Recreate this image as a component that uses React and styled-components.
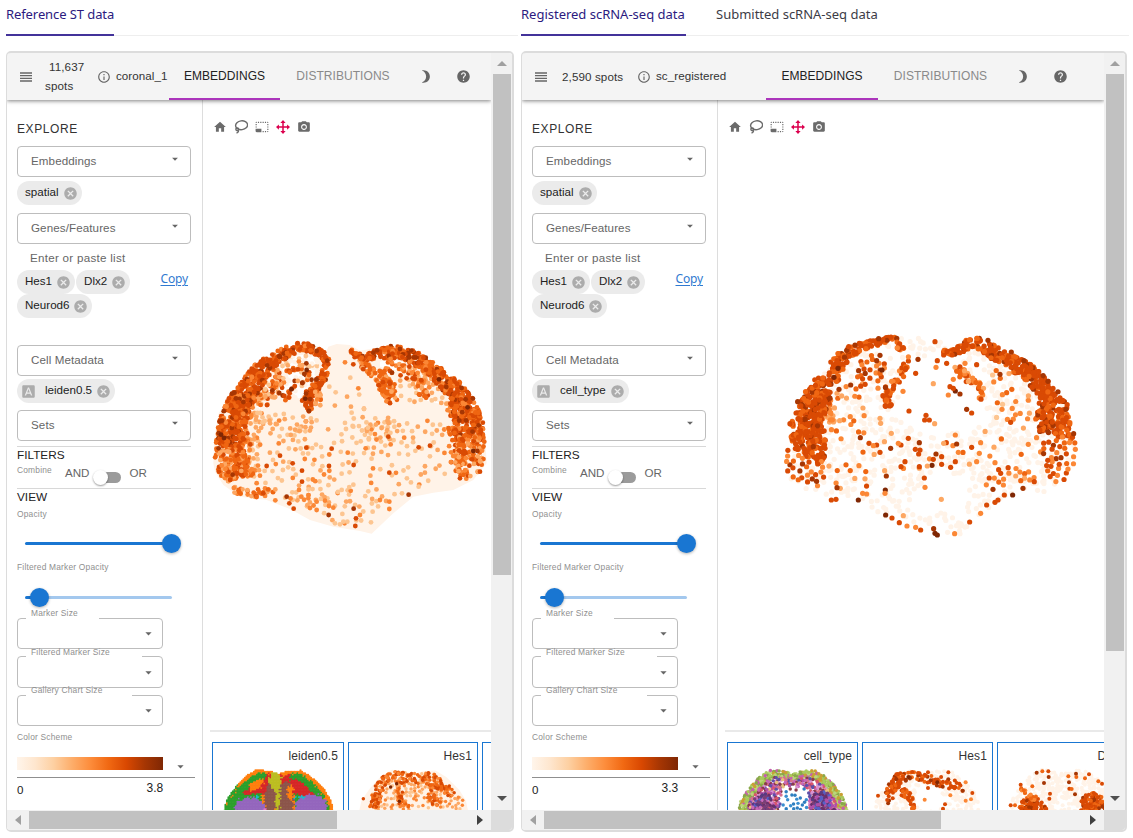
import React from 'react';
import styled, { createGlobalStyle } from 'styled-components';
import {
  MdReorder, MdInfoOutline, MdBrightness3, MdHelp, MdHome,
  MdPhotoSizeSelectSmall, MdPhotoCamera, MdCancel, MdFontDownload, MdArrowDropDown,
} from 'react-icons/md';

const Global = createGlobalStyle`
  * { box-sizing: border-box; }
  html, body { margin: 0; background: #fff; overflow: hidden; }
  body { font-family: "Liberation Sans", Arial, sans-serif; font-size: 11.6px; letter-spacing: 0.06px; color: #222; }
`;

/* ---------- point clouds ---------- */

const O = ['#fff3e8', '#fee0c4', '#fdc590', '#fda762', '#fb8735', '#ef6612', '#d94a04', '#a63603', '#7f2704'];

function makeRng(seed) {
  let s = seed;
  return () => {
    s = (s * 1664525 + 1013904223) % 4294967296;
    return s / 4294967296;
  };
}

function inside(poly, x, y) {
  let hit = false;
  for (let i = 0, j = poly.length - 1; i < poly.length; j = i++) {
    const [xi, yi] = poly[i];
    const [xj, yj] = poly[j];
    if (yi > y !== yj > y && x < ((xj - xi) * (y - yi)) / (yj - yi) + xi) hit = !hit;
  }
  return hit;
}

const pick = (rng, palette) => palette[Math.floor(rng() * palette.length)];

function band(rng, path, n, palette) {
  const lens = path.slice(1).map((p, i) => Math.hypot(p[0] - path[i][0], p[1] - path[i][1]) * (p[2] + path[i][2] + 6));
  const total = lens.reduce((a, b) => a + b, 0);
  const out = [];
  for (let k = 0; k < n; k++) {
    let t = rng() * total;
    let i = 0;
    while (i < lens.length - 1 && t > lens[i]) t -= lens[i++];
    const f = Math.min(1, t / lens[i]);
    const [a, b] = [path[i], path[i + 1]];
    const dx = b[0] - a[0];
    const dy = b[1] - a[1];
    const l = Math.hypot(dx, dy) || 1;
    const w = (a[2] + (b[2] - a[2]) * f) * (rng() * 2 - 1);
    out.push([a[0] + dx * f - (dy / l) * w, a[1] + dy * f + (dx / l) * w, pick(rng, palette)]);
  }
  return out;
}

function fill(rng, poly, n, palette, gap = 0, holes = []) {
  const xs = poly.map((p) => p[0]);
  const ys = poly.map((p) => p[1]);
  const [x0, x1, y0, y1] = [Math.min(...xs), Math.max(...xs), Math.min(...ys), Math.max(...ys)];
  const out = [];
  for (let tries = 0; out.length < n && tries < n * 20; tries++) {
    const x = x0 + rng() * (x1 - x0);
    const y = y0 + rng() * (y1 - y0);
    if (!inside(poly, x, y) || holes.some((h) => inside(h, x, y))) continue;
    if (gap && out.some((p) => Math.hypot(p[0] - x, p[1] - y) < gap)) continue;
    out.push([x, y, pick(rng, palette)]);
  }
  return out;
}

const spots = (c, list) => list.map(([x, y]) => [x, y, c]);
const box = (x0, y0, x1, y1) => [[x0, y0], [x1, y0], [x1, y1], [x0, y1]];
const toPath = (p) => `M${p.map((q) => q.join(' ')).join('L')}Z`;

function Dots({ data, r }) {
  return data.map(([x, y, c], i) => (
    <circle key={i} cx={x.toFixed(1)} cy={y.toFixed(1)} r={r} fill={typeof c === 'number' ? O[c] : c} />
  ));
}

const stTissue = [[40, 400], [42, 330], [56, 250], [110, 170], [160, 115], [230, 65], [300, 42], [350, 48], [380, 62], [385, 50], [410, 42], [450, 45], [480, 62], [550, 50], [620, 55], [690, 95], [750, 150], [790, 180], [830, 260], [855, 310], [860, 400], [820, 450], [760, 480], [700, 488], [640, 500], [580, 550], [515, 611], [480, 603], [400, 590], [330, 570], [270, 537], [200, 510], [120, 500], [70, 465], [45, 425]];
const stGap = [[270, 78], [340, 72], [368, 105], [350, 160], [320, 175], [300, 205], [230, 200], [190, 225], [150, 270], [136, 260], [150, 210], [200, 155], [235, 115]];

const stDots = (() => {
  const r = makeRng(7);
  const deep = [4, 5, 5, 5, 5, 6, 6, 6, 6, 6, 7];
  const deepL = [5, 5, 6, 6, 6, 6, 7];
  const mid = [3, 4, 4, 5, 5, 6];
  const mix = [2, 3, 3, 4, 5, 6];
  return [
    ...fill(r, stGap, 130, [0, 0, 0, 2]),
    ...fill(r, [[130, 270], [300, 240], [400, 300], [500, 230], [530, 260], [700, 250], [750, 300], [750, 440], [600, 480], [500, 580], [400, 580], [280, 520], [130, 440]], 215, [2, 2, 2, 2, 3, 3, 4], 13),
    ...fill(r, [[390, 120], [520, 150], [500, 240], [400, 240]], 6, [2, 2, 3], 20),
    ...fill(r, [[500, 280], [575, 270], [570, 360], [490, 360]], 18, [2, 3, 3, 4], 8),
    ...fill(r, [[270, 430], [480, 470], [480, 540], [270, 525]], 20, [2, 3, 4], 9),
    ...fill(r, box(600, 110, 735, 225), 42, [2, 2, 3, 3], 9),
    ...fill(r, [[140, 215], [200, 215], [175, 440], [130, 440]], 40, [2, 3, 3, 4], 9),
    ...band(r, [[310, 105, 14], [280, 105, 16], [250, 130, 20], [225, 170, 22], [200, 205, 20], [165, 220, 14]], 72, mix.concat([5, 6])),
    ...band(r, [[340, 140, 18], [300, 150, 18], [275, 180, 16], [245, 200, 16]], 22, [5, 6, 6, 7, 3]),
    ...band(r, [[375, 105, 8], [372, 140, 10], [345, 172, 14], [320, 200, 15], [322, 220, 15], [335, 245, 6]], 95, deepL),
    ...band(r, [[345, 185, 5], [365, 195, 14], [345, 225, 14]], 14, [3, 4, 5]),
    ...band(r, [[150, 270, 10], [180, 245, 20], [270, 290, 30], [340, 285, 10]], 22, [2, 3, 3]),
    ...band(r, [[150, 205, 40], [125, 280, 20], [135, 320, 14], [130, 400, 26], [145, 440, 20]], 60, mid),
    ...band(r, [[385, 110, 7], [378, 85, 10], [355, 65, 12], [330, 53, 12], [300, 51, 13], [260, 66, 15], [215, 94, 20], [180, 127, 28], [150, 170, 32], [122, 215, 36], [100, 260, 40], [92, 310, 42], [88, 350, 40]], 560, deep),
    ...band(r, [[85, 350, 40], [90, 390, 48], [105, 420, 48], [115, 445, 30]], 160, [3, 4, 5, 5, 5, 6, 6]),
    ...band(r, [[100, 480, 10], [150, 492, 10], [190, 488, 12], [230, 472, 14]], 34, mid),
    ...band(r, [[480, 88, 10], [505, 115, 14], [540, 140, 16], [560, 170, 24], [582, 195, 26], [560, 215, 16]], 105, [3, 4, 5, 5, 5, 6]),
    ...band(r, [[550, 100, 20], [590, 120, 20], [640, 130, 20], [660, 170, 22], [690, 190, 20]], 50, mid),
    ...band(r, [[750, 210, 18], [755, 270, 14], [765, 330, 20], [765, 400, 18]], 40, mid),
    ...band(r, [[455, 60, 5], [470, 80, 8], [500, 78, 12], [530, 74, 13], [570, 68, 20], [610, 70, 20], [650, 88, 20], [690, 115, 20], [740, 155, 25], [775, 195, 32], [795, 235, 38], [805, 290, 46], [810, 330, 44]], 540, deep),
    ...band(r, [[810, 320, 44], [812, 370, 42], [805, 400, 42], [780, 435, 24]], 130, [3, 4, 5, 5, 6]),
    ...spots(8, [[63, 314], [72, 324], [320, 120], [274, 178], [316, 206], [717, 148], [803, 232], [820, 363]]),
    ...spots(7, [[350, 63], [382, 92], [98, 434], [56, 355], [108, 205], [130, 216], [319, 100], [217, 181], [313, 132], [307, 158], [260, 500], [386, 555], [461, 536], [626, 494], [628, 82], [520, 68], [785, 174], [832, 363], [576, 128], [836, 286], [778, 272], [600, 57]]),
    ...spots(6, [[319, 353], [395, 356], [306, 422], [306, 455], [461, 405], [278, 400], [240, 377], [200, 408], [268, 520], [281, 536], [468, 565], [466, 588], [565, 320], [656, 352], [690, 347], [460, 103], [568, 428], [638, 145], [620, 145], [780, 445], [840, 425], [387, 408]]),
    ...spots(4, [[325, 505], [330, 534], [350, 540], [375, 512], [400, 533], [387, 528], [480, 555], [497, 355], [568, 515], [568, 537], [540, 510], [435, 97], [475, 175], [226, 511], [304, 500], [350, 515]]),
    ...spots(2, [[405, 580], [420, 583], [430, 575], [442, 575], [513, 577], [518, 545], [407, 187], [388, 170], [492, 237], [455, 248], [438, 297], [460, 290], [606, 490], [656, 470]]),
  ];
})();

const scDots = (() => {
  const r = makeRng(23);
  const outline = [[50, 430], [70, 340], [110, 220], [180, 140], [230, 95], [300, 60], [380, 55], [470, 55], [560, 75], [620, 60], [700, 90], [760, 130], [830, 190], [890, 260], [920, 380], [890, 470], [830, 515], [750, 510], [690, 545], [600, 610], [560, 655], [490, 630], [400, 600], [300, 580], [220, 520], [130, 525], [60, 475]];
  const hole = [[400, 110], [540, 110], [650, 240], [620, 330], [480, 350], [380, 300]];
  const hole2 = [[420, 530], [500, 440], [600, 490], [570, 570], [440, 590]];
  const deep = [5, 5, 6, 6, 6, 6, 6, 6, 7];
  return [
    ...fill(r, outline, 700, [0], 4, [hole, hole2]),
    ...fill(r, [[170, 270], [400, 330], [600, 330], [780, 270], [820, 400], [700, 450], [550, 440], [400, 450], [200, 400]], 24, [3, 4, 4, 5], 26),
    ...fill(r, [[160, 430], [300, 430], [290, 500], [200, 510]], 11, [3, 4, 5, 6], 18),
    ...fill(r, [[640, 500], [660, 440], [790, 440], [800, 490]], 20, [4, 4, 5, 6, 3], 12),
    ...fill(r, box(665, 150, 785, 300), 22, [2, 3, 4, 4, 5], 12),
    ...fill(r, box(170, 150, 290, 345), 26, [3, 3, 4, 5], 12),
    ...band(r, [[150, 280, 25], [175, 290, 22], [195, 300, 10]], 22, [3, 4]),
    ...band(r, [[385, 55, 5], [340, 60, 12], [300, 72, 10], [250, 88, 16], [215, 117, 20], [190, 150, 24], [190, 185, 20]], 105, deep),
    ...band(r, [[170, 180, 20], [148, 208, 36], [140, 240, 42], [118, 285, 42], [105, 330, 50]], 225, deep),
    ...band(r, [[105, 325, 50], [125, 370, 50], [140, 400, 28], [146, 430, 12]], 105, deep),
    ...fill(r, [[45, 400], [70, 370], [165, 390], [160, 510], [130, 490], [75, 480], [45, 450]], 38, [4, 5, 6, 6, 6, 7], 12),
    ...band(r, [[365, 60, 6], [395, 85, 10], [414, 115, 5], [400, 155, 10], [375, 185, 12], [350, 215, 12], [345, 245, 12], [365, 268, 6]], 54, [4, 5, 6, 6, 6]),
    ...fill(r, box(265, 105, 355, 205), 24, [4, 5, 6, 6, 7], 10),
    ...band(r, [[520, 98, 8], [555, 98, 10], [580, 82, 12], [610, 66, 18], [650, 82, 18], [690, 110, 22], [740, 135, 22], [780, 160, 25]], 160, deep),
    ...band(r, [[770, 150, 20], [800, 185, 28], [835, 225, 34], [848, 262, 40], [840, 305, 44], [838, 340, 34]], 220, deep),
    ...band(r, [[885, 250, 8], [890, 300, 12], [885, 350, 15], [915, 355, 6]], 22, [5, 6, 6]),
    ...fill(r, [[820, 350], [920, 345], [915, 420], [895, 475], [860, 490], [820, 450]], 38, [4, 5, 6, 6, 6, 7], 12),
    ...band(r, [[558, 135, 6], [572, 158, 14], [600, 180, 10], [630, 190, 12], [642, 215, 9], [630, 238, 8]], 36, [3, 4, 5, 6, 6]),
    ...spots(8, [[204, 145], [336, 150], [192, 172], [486, 436], [346, 510], [265, 540], [728, 525], [347, 585], [556, 213], [495, 640], [502, 645]]),
    ...spots(7, [[266, 152], [320, 122], [330, 106], [326, 56], [255, 75], [444, 118], [570, 222], [242, 195], [207, 208], [654, 61], [724, 96], [762, 122], [83, 245], [130, 380], [590, 268], [491, 626], [448, 368], [560, 372], [498, 402], [271, 353], [349, 468], [690, 163], [834, 184], [888, 268], [911, 341], [201, 503], [669, 508], [759, 505], [362, 385]]),
    ...spots(6, [[495, 65], [437, 160], [502, 122], [468, 286], [464, 300], [478, 300], [417, 273], [415, 355], [393, 375], [605, 279], [436, 388], [446, 402], [450, 390], [448, 440], [550, 205], [540, 200], [490, 418], [515, 410], [542, 442], [405, 425], [393, 440], [515, 433], [184, 540], [198, 538], [366, 594], [388, 608], [452, 630], [675, 547], [684, 540], [650, 555], [703, 525], [599, 606], [620, 134], [530, 130], [722, 307], [463, 474], [297, 370], [320, 375], [330, 397], [556, 425], [529, 368], [605, 382]]),
    ...spots(4, [[411, 618], [437, 622], [554, 641], [465, 502], [345, 520], [632, 580], [399, 214], [365, 184], [498, 142], [535, 225], [550, 178], [585, 130], [556, 345], [565, 397], [620, 425], [628, 400], [632, 368], [675, 428], [278, 520], [290, 522], [310, 377], [385, 370]]),
    ...spots(3, [[490, 191], [494, 311], [400, 587], [514, 538], [344, 452], [330, 295], [332, 310], [364, 340], [472, 438], [521, 370]]),
  ];
})();

const dome = (x0, x1) => {
  const w = x1 - x0;
  return [[0, 1], [0.02, 0.76], [0.1, 0.45], [0.2, 0.16], [0.3, 0.0], [0.4, 0.03], [0.5, 0.1], [0.6, 0.03], [0.7, 0.02], [0.8, 0.18], [0.92, 0.5], [0.98, 0.76], [1, 1], [1, 1.3], [0, 1.3]]
    .map(([a, b]) => [x0 + a * w, 148 + b * 122]);
};

const ell = (x, y, cx, cy, rx, ry) => ((x - cx) / rx) ** 2 + ((y - cy) / ry) ** 2 < 1;

const leidenDots = (() => {
  const r = makeRng(5);
  const outer = dome(72, 400);
  const scaled = (k) => outer.map(([x, y]) => [236 + (x - 236) * k, 290 + (y - 290) * k]);
  const ring1 = scaled(0.93);
  const ring2 = scaled(0.8);
  const out = [];
  for (let y = 146; y < 278; y += 4.5) {
    for (let x = 72; x < 402; x += 4.5) {
      if (!inside(outer, x, y)) continue;
      const a = x + (r() - 0.5) * 9;
      const b = y + (r() - 0.5) * 9;
      let c = '#d62728';
      if (ell(a, b, 234, 210, 8, 80) || ell(a, b, 227, 180, 18, 26)) c = '#bcbd22';
      else if (ell(a, b, 300, 232, 18, 4) || ell(a, b, 172, 230, 5, 4)) c = '#17becf';
      else if (ell(a, b, 150, 262, 44, 30) || ell(a, b, 335, 260, 48, 36)) c = '#9467bd';
      else if (ell(a, b, 272, 218, 10, 20) || ell(a - (210 - b) * 0.7, b, 160, 196, 18, 20)) c = '#ff7f0e';
      else if (ell(a, b, 212, 240, 18, 48) || ell(a, b, 258, 240, 24, 56)) c = '#8c564b';
      else if (b > 262 && a > 190 && a < 215) c = '#e377c2';
      else if (!inside(ring1, a, b)) c = a < 110 && r() > 0.3 ? '#2ca02c' : '#ff7f0e';
      else if (!inside(ring2, a, b) && (a < 200 || a > 268)) c = '#2ca02c';
      else if (b > 222 && !(a > 300 && b < 235)) c = a > 185 && a < 285 ? '#ff7f0e' : '#2ca02c';
      out.push([x, y, c]);
    }
  }
  return out;
})();

const cellDots = (() => {
  const r = makeRng(31);
  const poly = dome(86, 412);
  const core = poly.map(([x, y]) => [249 + (x - 249) * 0.84, 290 + (y - 290) * 0.84]);
  return [
    ...fill(r, poly, 380, ['#a9c95c', '#a9c95c', '#8aa84a', '#bcd67a', '#c9a034', '#c65fae'], 4, [core]),
    ...fill(r, core, 480, ['#c768b8', '#b04fa8', '#d8556c', '#e8c07d', '#d992d0', '#8a3a4a', '#5f4fa8', '#d9708a'], 4, [[[215, 200], [290, 200], [300, 275], [210, 275]]]),
    ...fill(r, box(218, 205, 290, 272), 22, ['#2f7fc0', '#3a8fd0', '#2f7fc0', '#8a3a4a'], 9),
    ...fill(r, [[120, 272], [135, 230], [175, 215], [200, 272]], 55, ['#5a3a80', '#7a3f78', '#5560c8', '#6a2f6a', '#7a3f78', '#c768b8'], 5),
    ...fill(r, [[300, 272], [305, 225], [350, 210], [380, 272]], 60, ['#5a3a80', '#5560c8', '#7a3f78', '#6a2f6a', '#b04fa8'], 5),
  ];
})();

const hesSt = (() => {
  const r = makeRng(12);
  return [
    ...fill(r, [[540, 175], [590, 155], [700, 160], [740, 200], [790, 240], [780, 268], [520, 268], [510, 230]], 150, [2, 3, 3, 4], 7),
    ...band(r, [[520, 262, 14], [530, 225, 14], [545, 185, 14], [580, 165, 12], [640, 175, 16], [690, 175, 18], [735, 200, 16], [760, 225, 10]], 170, [4, 5, 5, 6, 6]),
    ...band(r, [[600, 175, 10], [605, 210, 14], [590, 240, 12], [625, 262, 10]], 45, [3, 4, 5, 6]),
    ...band(r, [[690, 190, 12], [690, 225, 12], [715, 255, 14]], 36, [4, 5, 5, 6]),
    ...spots(8, [[590, 190], [572, 200], [598, 243]]),
    ...spots(6, [[490, 235], [555, 195], [625, 165], [685, 157], [668, 180]]),
    ...spots(4, [[775, 231], [788, 240], [787, 255]]),
  ];
})();

const hesSc = (() => {
  const r = makeRng(44);
  return [
    ...fill(r, dome(494, 816), 300, [0], 5, [[[620, 200], [700, 200], [690, 272], [625, 272]]]),
    ...band(r, [[535, 250, 8], [545, 205, 16], [565, 175, 16], [600, 165, 14], [650, 175, 12], [700, 185, 16], [740, 195, 16], [755, 215, 14]], 120, [5, 6, 6, 6, 7]),
    ...band(r, [[575, 210, 14], [600, 230, 10], [608, 265, 8]], 30, [5, 6, 6]),
    ...spots(6, [[505, 226], [560, 162], [655, 156], [655, 203], [788, 218], [716, 156], [700, 265], [706, 252]]),
    ...spots(4, [[645, 238], [722, 225], [768, 186], [768, 241], [784, 237]]),
    ...spots(8, [[596, 170], [683, 186]]),
  ];
})();

const dlxSc = (() => {
  const r = makeRng(51);
  return [
    ...fill(r, dome(896, 1222), 460, [0], 4),
    ...fill(r, [[925, 272], [940, 235], [975, 225], [1020, 272]], 70, [5, 6, 6, 7]),
    ...fill(r, [[1105, 272], [1115, 235], [1140, 210], [1185, 230], [1190, 272]], 90, [5, 6, 6, 7]),
    ...band(r, [[932, 205, 5], [955, 225, 8], [975, 235, 6]], 16, [4, 5]),
    ...spots(7, [[980, 157], [1002, 188], [1016, 170], [1077, 186], [1095, 222], [1098, 160]]),
    ...spots(6, [[932, 193], [1015, 153], [1020, 220], [1018, 235], [1078, 205], [1137, 162], [1176, 190], [902, 255]]),
    ...spots(5, [[967, 198], [997, 153], [1075, 168], [1099, 170], [1085, 206], [1125, 174], [1165, 183], [915, 255]]),
  ];
})();

/* ---------- page ---------- */

const Page = styled.div`
  width: 1133px; height: 838px; background: #fff; overflow: hidden;
  display: flex; gap: 7px; padding-left: 6px;
`;
const Column = styled.section`width: ${(p) => p.$width}px; flex: none;`;
const Tabs = styled.nav`
  height: 36px; margin-bottom: 15px; width: ${(p) => p.$width}px;
  display: flex; gap: 30px; border-bottom: 1px solid #eee;
  font: 13px "Noto Sans", "Open Sans", sans-serif; letter-spacing: ${(p) => p.$spacing}px;
`;
const Tab = styled.div`
  height: 36px; line-height: 28px; white-space: nowrap; width: ${(p) => p.$width}px;
  color: ${(p) => (p.$active ? '#2b1a80' : '#3c3c46')};
  border-bottom: ${(p) => (p.$active ? '2px solid #43329a' : '0')};
`;
const Frame = styled.div`
  height: 781px; border: 2px solid #dcdcdc; border-left-width: 1px; border-radius: 5px; overflow: hidden;
  display: grid; grid-template: 757px 20px / 1fr 21px;
`;
const Viewport = styled.div`display: flex; flex-direction: column; overflow: hidden; background: #fff;`;

const Toolbar = styled.header`
  height: 47px; flex: none; background: #f4f4f4; display: flex; align-items: center;
  box-shadow: 0 1px 4px rgba(0,0,0,.5); position: relative; color: #333;
  svg { flex: none; color: #666; }
`;
const MenuIcon = styled(MdReorder)`margin-left: 11px; width: 16px; height: 16px;`;
const SpotCount = styled.div`
  width: ${(p) => p.$width}px; margin-left: ${(p) => p.$left}px; line-height: 19px; flex: none;
  text-indent: ${(p) => (p.$wrap ? 4 : 0)}px; margin-top: -1px; letter-spacing: .12px;
`;
const InfoIcon = styled(MdInfoOutline)`width: 14px; height: 14px; margin-left: ${(p) => p.$left || 0}px;`;
const DatasetName = styled.div`width: ${(p) => p.$width}px; flex: none; margin-left: 5px; margin-top: -2px; white-space: nowrap;`;
const ViewTab = styled.div`
  height: 47px; width: ${(p) => p.$width}px; flex: none; line-height: 47px; text-align: center;
  font-size: 12px; letter-spacing: .05px; color: ${(p) => (p.$active ? '#222' : '#8a8a8a')};
  border-bottom: ${(p) => (p.$active ? '2px solid #ab35bb' : '0')};
`;
const MoonIcon = styled(MdBrightness3)`width: 15px; height: 15px; margin-left: 12px;`;
const HelpIcon = styled(MdHelp)`width: 15px; height: 15px; margin-left: 23px;`;

const Content = styled.div`flex: 1; min-height: 0; display: flex;`;
const Sidebar = styled.aside`
  width: 196px; flex: none; border-right: 1px solid #ddd; padding: 18px 0 0 10px;
  display: flex; flex-direction: column; align-items: flex-start; overflow: hidden; color: #666;
  > * { flex: none; }
`;
const Explore = styled.h2`
  margin: 0 0 6px; height: 22px; line-height: 22px; font-size: 12px; font-weight: 400; letter-spacing: .6px; color: #333;
`;
const SelectBox = styled.div`
  width: 174px; height: 31px; border: 1px solid #bdbdbd; border-radius: 4px; padding: 0 8px 2px 13px;
  display: flex; align-items: center; justify-content: space-between; letter-spacing: .1px;
  svg { width: 14px; height: 14px; margin-top: -3px; color: #666; }
`;
const ChipRow = styled.div`
  width: 174px; height: ${(p) => p.$height}px; padding-top: ${(p) => p.$top}px;
  display: flex; align-items: flex-start; justify-content: space-between;
`;
const ChipList = styled.div`display: flex; flex-wrap: wrap; gap: 0 1px; width: ${(p) => p.$width || 174}px;`;
const ChipBody = styled.div`
  height: 24px; border-radius: 12px; background: #ebebeb; color: #222; padding: 0 4px 0 8px;
  display: flex; align-items: center; gap: 4px; letter-spacing: 0;
  span { margin-top: -3px; }
  svg { width: 15px; height: 15px; color: #acacac; }
`;
const TypeIcon = styled(MdFontDownload)`margin: 0 5px 0 -4px;`;
const ListInput = styled.div`height: 26px; line-height: 27px; padding-left: 13px; letter-spacing: .28px;`;
const CopyLink = styled.a`
  font: 12px/17px "Noto Sans", sans-serif; letter-spacing: -.15px; color: #3079d0; text-decoration: underline;
  text-underline-offset: 2px; margin-right: 3px;
`;
const Section = styled.div`
  width: 174px; height: ${(p) => p.$height}px; border-top: 1px solid #d8d8d8; margin-top: ${(p) => p.$top || 0}px;
`;
const SectionTitle = styled.h3`
  margin: 0; height: 18px; line-height: 17px; font-size: 11.8px; letter-spacing: 0; font-weight: 400; color: #222;
`;
const Caption = styled.div`
  font-size: 8.4px; letter-spacing: .2px; line-height: 10px; height: 10px; color: #8f8f8f; white-space: nowrap;
  margin-top: ${(p) => p.$top || 0}px;
`;
const CombineRow = styled.div`display: flex; align-items: flex-start; letter-spacing: 0; line-height: 16px;`;
const CombineLabel = styled(Caption)`width: 48px;`;
const Switch = styled.div`
  width: 28px; height: 16px; margin: 4px 8px 0 4px; display: flex; align-items: center;
  &::before { content: ''; width: 15px; height: 15px; border-radius: 50%; background: #fff; box-shadow: 0 1px 2px rgba(0,0,0,.4); z-index: 1; }
  &::after { content: ''; width: 21px; height: 11px; margin-left: -8px; border-radius: 6px; background: #9b9b9b; }
`;
const Slider = styled.div`
  width: 147px; height: 20px; margin: ${(p) => p.$top}px 0 0 8px; display: flex; align-items: center;
`;
const Fill = styled.div`width: ${(p) => p.$width}px; height: 3px; border-radius: 2px 0 0 2px; background: #1976d2; flex: none;`;
const Thumb = styled.div`
  width: 19px; height: 19px; border-radius: 50%; background: #1976d2; flex: none; margin: 0 -9px 0 -10px;
  box-shadow: 0 1px 3px rgba(0,0,0,.3); z-index: 1;
`;
const Rest = styled.div`flex: 1; height: 3px; background: #a3c8ee; border-radius: 0 2px 2px 0;`;
const Fields = styled.div`padding-top: 6px;`;
const Field = styled.fieldset`
  width: 146px; height: 36px; margin: 0 0 2.5px; padding: 0 8px; border: 1px solid #bdbdbd; border-radius: 4px;
  display: flex; justify-content: flex-end; min-width: 0;
  legend { padding: 0 0 0 5px; width: ${(p) => p.$legend}px; height: 10px; line-height: 9px; font-size: 8.4px;
    letter-spacing: .2px; color: #8f8f8f; white-space: nowrap; }
  legend span { position: relative; top: -4px; }
  svg { width: 15px; height: 15px; margin: 3px -2px 0 0; color: #666; }
`;
const SchemeRow = styled.div`
  width: 178px; height: 27px; margin-top: 9px; padding-top: 6px; border-bottom: 1px solid #8f8f8f; display: flex;
  svg { width: 15px; height: 15px; margin: 2px 0 0 10px; color: #666; }
`;
const Gradient = styled.div`
  width: 146px; height: 13px; background: linear-gradient(90deg, ${['#fff5eb', '#fee6ce', '#fdd0a2', '#fdae6b', '#fd8d3c', '#f16913', '#d94801', '#a63603', '#7f2704'].join(',')});
`;
const Scale = styled.div`
  width: 146px; display: flex; justify-content: space-between; color: #222; font-size: 12px; letter-spacing: -.1px;
  line-height: 20px;
  span:first-child { padding-top: 2px; font-size: 11.6px; }
`;

const Main = styled.main`flex: 1; min-width: 0; display: flex; flex-direction: column; overflow: hidden;`;
const PlotTools = styled.div`
  height: 40px; flex: none; padding: 20px 0 0 10px; display: flex; gap: 7px; color: #6b6b6b;
  svg { width: 14px; height: 14px; flex: none; }
`;
const Plot = styled.svg`display: block; flex: none;`;
const Gallery = styled.div`
  margin-left: 7px; border-top: 2px solid #e9e9e9; padding: 10px 0 0 2px; display: flex; gap: 4px; flex: 1;
`;
const Card = styled.article`
  width: ${(p) => p.$width}px; height: 130px; flex: none; border: 1px solid #1976d2; overflow: hidden;
  display: flex; flex-direction: column; color: #333;
`;
const CardTitle = styled.div`height: 24px; line-height: 26px; text-align: right; padding-right: 5px; font-size: 12px; letter-spacing: .1px; flex: none;`;

const VScroll = styled.div`
  background: #f1f1f1; display: flex; flex-direction: column; align-items: center; justify-content: space-between;
  padding: 8px 0 9px 1px;
`;
const VThumb = styled.div`width: 18px; height: ${(p) => p.$size}px; background: #c1c1c1; margin: 8px 0 auto 0;`;
const HScroll = styled.div`background: #f1f1f1; display: flex; align-items: center; padding: 0 8px;`;
const HThumb = styled.div`width: ${(p) => p.$size}px; height: 18px; background: #c1c1c1; margin: 0 auto 0 8px;`;
const Corner = styled.div`background: #dcdcdc;`;
const Arrow = styled.svg`display: block; flex: none;`;

function Chip({ label, typed }) {
  return (
    <ChipBody>
      {typed && <TypeIcon />}
      <span>{label}</span>
      <MdCancel />
    </ChipBody>
  );
}

function Select({ label }) {
  return <SelectBox>{label}<MdArrowDropDown /></SelectBox>;
}

function SizeField({ label, legend }) {
  return <Field $legend={legend}><legend><span>{label}</span></legend><MdArrowDropDown /></Field>;
}

function Controls({ metadata, max }) {
  return (
    <Sidebar>
      <Explore>EXPLORE</Explore>
      <Select label="Embeddings" />
      <ChipRow $height={36} $top={4}><ChipList><Chip label="spatial" /></ChipList></ChipRow>
      <Select label="Genes/Features" />
      <ListInput>Enter or paste list</ListInput>
      <ChipRow $height={75} $top={0}>
        <ChipList $width={125}><Chip label="Hes1" /><Chip label="Dlx2" /><Chip label="Neurod6" /></ChipList>
        <CopyLink>Copy</CopyLink>
      </ChipRow>
      <Select label="Cell Metadata" />
      <ChipRow $height={34} $top={3}><ChipList><Chip label={metadata} typed /></ChipList></ChipRow>
      <Select label="Sets" />
      <Section $height={42} $top={5}>
        <SectionTitle>FILTERS</SectionTitle>
        <CombineRow><CombineLabel>Combine</CombineLabel>AND<Switch />OR</CombineRow>
      </Section>
      <Section $height={21}><SectionTitle>VIEW</SectionTitle></Section>
      <Caption>Opacity</Caption>
      <Slider $top={14}><Fill $width={147} /><Thumb /></Slider>
      <Caption $top={9}>Filtered Marker Opacity</Caption>
      <Slider $top={15}><Fill $width={15} /><Thumb /><Rest /></Slider>
      <Fields>
        <SizeField label="Marker Size" legend={73} />
        <SizeField label="Filtered Marker Size" legend={116} />
        <SizeField label="Gallery Chart Size" legend={106} />
      </Fields>
      <Caption $top={3}>Color Scheme</Caption>
      <SchemeRow><Gradient /><MdArrowDropDown /></SchemeRow>
      <Scale><span>0</span><span>{max}</span></Scale>
    </Sidebar>
  );
}

function Lasso() {
  return (
    <svg viewBox="0 0 24 24" fill="none" stroke="currentColor" strokeWidth="2.4">
      <ellipse cx="13" cy="9" rx="10.3" ry="7.6" transform="rotate(-8 13 9)" />
      <circle cx="5.6" cy="16" r="2.4" />
      <path d="M7.5 17.5c.5 2-.8 4-3.2 5" />
    </svg>
  );
}

function Move() {
  return (
    <svg viewBox="0 0 24 24" fill="#dc004e">
      <path d="M12 0l4.5 5h-3.2v5.7H19V7.5l5 4.5-5 4.5v-3.2h-5.7V19h3.2L12 24l-4.5-5h3.2v-5.7H5v3.2L0 12l5-4.5v3.2h5.7V5H7.5z" />
    </svg>
  );
}

function Thumbnail({ x, outline, data, r = 5.2 }) {
  return (
    <Plot width="130" height="104" viewBox={`${x} 140 390 312`}>
      {outline && <path d={toPath(outline)} fill={O[0]} />}
      <Dots data={data} r={r} />
    </Plot>
  );
}

function Explorer({ vThumb, hThumb, header, controls, plot, gallery }) {
  return (
    <Frame>
      <Viewport>
        <Toolbar>
          <MenuIcon />
          {header}
          <MoonIcon />
          <HelpIcon />
        </Toolbar>
        <Content>
          {controls}
          <Main>
            <PlotTools><MdHome /><Lasso /><MdPhotoSizeSelectSmall /><Move /><MdPhotoCamera /></PlotTools>
            {plot}
            <Gallery>{gallery}</Gallery>
          </Main>
        </Content>
      </Viewport>
      <VScroll>
        <Arrow width="10" height="5"><path d="M0 5L5 0L10 5Z" fill="#a0a0a0" /></Arrow>
        <VThumb $size={vThumb} />
        <Arrow width="10" height="5"><path d="M0 0L5 5L10 0Z" fill="#505050" /></Arrow>
      </VScroll>
      <HScroll>
        <Arrow width="6" height="10"><path d="M6 0L0 5L6 10Z" fill="#a0a0a0" /></Arrow>
        <HThumb $size={hThumb} />
        <Arrow width="6" height="10"><path d="M0 0L6 5L0 10Z" fill="#404040" /></Arrow>
      </HScroll>
      <Corner />
    </Frame>
  );
}

export default function App() {
  return (
    <Page>
      <Global />
      <Column $width={508}>
        <Tabs $width={512} $spacing={-0.09}><Tab $active $width={108}>Reference ST data</Tab></Tabs>
        <Explorer
          vThumb={501}
          hThumb={308}
          header={(
            <>
              <SpotCount $width={52} $left={11} $wrap>11,637<br />spots</SpotCount>
              <InfoIcon />
              <DatasetName $width={53}>coronal_1</DatasetName>
              <ViewTab $active $width={111}>EMBEDDINGS</ViewTab>
              <ViewTab $width={126}>DISTRIBUTIONS</ViewTab>
            </>
          )}
          controls={<Controls metadata="leiden0.5" max="3.8" />}
          plot={(
            <Plot width="288" height="590" viewBox="203 140 288 590">
              <g transform="translate(200 330) scale(.3333)">
                <path d={toPath(stTissue)} fill={O[0]} />
                <path d={toPath(stGap)} fill="#fff" />
                <path d="M540 95Q590 75 640 115Q600 130 540 110ZM670 210Q700 205 735 225" fill="#fff" />
                <Dots data={stDots} r={7.2} />
              </g>
            </Plot>
          )}
          gallery={(
            <>
              <Card $width={132}><CardTitle>leiden0.5</CardTitle><Thumbnail x={39} data={leidenDots} r={3.4} /></Card>
              <Card $width={130}><CardTitle>Hes1</CardTitle><Thumbnail x={447} outline={dome(478, 804)} data={hesSt} /></Card>
              <Card $width={131} />
            </>
          )}
        />
      </Column>
      <Column $width={606}>
        <Tabs $width={608} $spacing={-0.01}>
          <Tab $active $width={165}>Registered scRNA-seq data</Tab>
          <Tab $width={164}>Submitted scRNA-seq data</Tab>
        </Tabs>
        <Explorer
          vThumb={577}
          hThumb={397}
          header={(
            <>
              <SpotCount $width={66} $left={13}>2,590 spots</SpotCount>
              <InfoIcon $left={9} />
              <DatasetName $width={110}>sc_registered</DatasetName>
              <ViewTab $active $width={112}>EMBEDDINGS</ViewTab>
              <ViewTab $width={125}>DISTRIBUTIONS</ViewTab>
            </>
          )}
          controls={<Controls metadata="cell_type" max="3.3" />}
          plot={(
            <Plot width="386" height="590" viewBox="718 140 386 590">
              <g transform="translate(770 320) scale(.3333)"><Dots data={scDots} r={7.8} /></g>
            </Plot>
          )}
          gallery={(
            <>
              <Card $width={131}><CardTitle>cell_type</CardTitle><Thumbnail x={54} data={cellDots} /></Card>
              <Card $width={131}><CardTitle>Hes1</CardTitle><Thumbnail x={460} data={hesSc} r={6} /></Card>
              <Card $width={131}><CardTitle>Dlx2</CardTitle><Thumbnail x={864} data={dlxSc} r={6} /></Card>
            </>
          )}
        />
      </Column>
    </Page>
  );
}
